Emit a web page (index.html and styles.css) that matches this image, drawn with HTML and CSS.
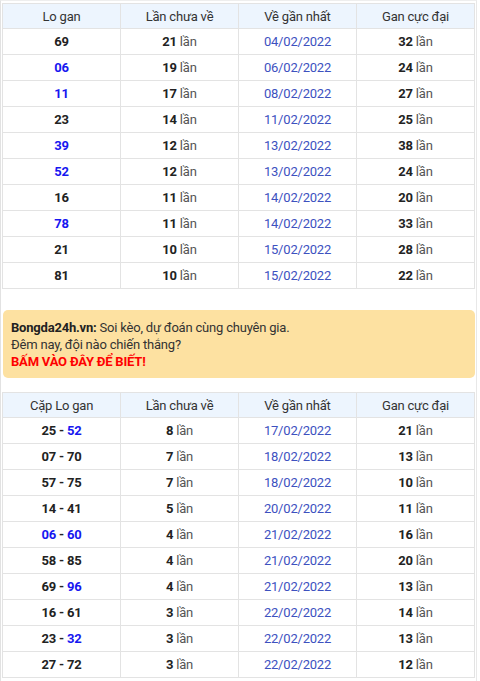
FILE: index.html
```html
<!DOCTYPE html>
<html>
<head>
<meta charset="utf-8">
<link rel="stylesheet" href="styles.css">
</head>
<body>
<div class="page">
  <table class="grid">
    <thead>
      <tr><th>Lo gan</th><th>Lần chưa về</th><th>Về gần nhất</th><th>Gan cực đại</th></tr>
    </thead>
    <tbody>
      <tr><td class="num">69</td><td><b>21</b> lần</td><td class="date">04/02/2022</td><td><b>32</b> lần</td></tr>
      <tr><td class="num blue">06</td><td><b>19</b> lần</td><td class="date">06/02/2022</td><td><b>24</b> lần</td></tr>
      <tr><td class="num blue">11</td><td><b>17</b> lần</td><td class="date">08/02/2022</td><td><b>27</b> lần</td></tr>
      <tr><td class="num">23</td><td><b>14</b> lần</td><td class="date">11/02/2022</td><td><b>25</b> lần</td></tr>
      <tr><td class="num blue">39</td><td><b>12</b> lần</td><td class="date">13/02/2022</td><td><b>38</b> lần</td></tr>
      <tr><td class="num blue">52</td><td><b>12</b> lần</td><td class="date">13/02/2022</td><td><b>24</b> lần</td></tr>
      <tr><td class="num">16</td><td><b>11</b> lần</td><td class="date">14/02/2022</td><td><b>20</b> lần</td></tr>
      <tr><td class="num blue">78</td><td><b>11</b> lần</td><td class="date">14/02/2022</td><td><b>33</b> lần</td></tr>
      <tr><td class="num">21</td><td><b>10</b> lần</td><td class="date">15/02/2022</td><td><b>28</b> lần</td></tr>
      <tr><td class="num">81</td><td><b>10</b> lần</td><td class="date">15/02/2022</td><td><b>22</b> lần</td></tr>
    </tbody>
  </table>

  <div class="promo">
    <div><b>Bongda24h.vn:</b> Soi kèo, dự đoán cùng chuyên gia.</div>
    <div>Đêm nay, đội nào chiến thắng?</div>
    <div class="cta">BẤM VÀO ĐÂY ĐỂ BIẾT!</div>
  </div>

  <table class="grid second">
    <thead>
      <tr><th>Cặp Lo gan</th><th>Lần chưa về</th><th>Về gần nhất</th><th>Gan cực đại</th></tr>
    </thead>
    <tbody>
      <tr><td class="num">25 - <span class="blue">52</span></td><td><b>8</b> lần</td><td class="date">17/02/2022</td><td><b>21</b> lần</td></tr>
      <tr><td class="num">07 - 70</td><td><b>7</b> lần</td><td class="date">18/02/2022</td><td><b>13</b> lần</td></tr>
      <tr><td class="num">57 - 75</td><td><b>7</b> lần</td><td class="date">18/02/2022</td><td><b>10</b> lần</td></tr>
      <tr><td class="num">14 - 41</td><td><b>5</b> lần</td><td class="date">20/02/2022</td><td><b>11</b> lần</td></tr>
      <tr><td class="num"><span class="blue">06</span> - <span class="blue">60</span></td><td><b>4</b> lần</td><td class="date">21/02/2022</td><td><b>16</b> lần</td></tr>
      <tr><td class="num">58 - 85</td><td><b>4</b> lần</td><td class="date">21/02/2022</td><td><b>20</b> lần</td></tr>
      <tr><td class="num">69 - <span class="blue">96</span></td><td><b>4</b> lần</td><td class="date">21/02/2022</td><td><b>13</b> lần</td></tr>
      <tr><td class="num">16 - 61</td><td><b>3</b> lần</td><td class="date">22/02/2022</td><td><b>14</b> lần</td></tr>
      <tr><td class="num">23 - <span class="blue">32</span></td><td><b>3</b> lần</td><td class="date">22/02/2022</td><td><b>13</b> lần</td></tr>
      <tr><td class="num">27 - 72</td><td><b>3</b> lần</td><td class="date">22/02/2022</td><td><b>12</b> lần</td></tr>
    </tbody>
  </table>
</div>
</body>
</html>
```

FILE: styles.css
```css
html, body {
  margin: 0;
  padding: 0;
  background: #fff;
}
body {
  font-family: Roboto, "Liberation Sans", Arial, sans-serif;
  font-size: 13px;
  letter-spacing: -0.2px;
  color: #333;
}
.page {
  width: 477px;
  border-left: 1px solid #e2e2e2;
  border-right: 1px solid #e8e8e8;
  border-top: 1px solid #eee;
  padding: 2px 2px 4px 1px;
  box-sizing: border-box;
  height: 681px;
  overflow: hidden;
}
.grid {
  width: 473px;
  border-collapse: collapse;
  table-layout: fixed;
}
.grid th, .grid td {
  border: 1px solid #e3e3e3;
  text-align: center;
  padding: 0;
}
.grid th {
  background: #edf5fe;
  font-weight: normal;
  color: #333;
  height: 24px;
}
.grid td {
  height: 25px;
  color: #555;
}
.grid td b {
  color: #222;
  font-weight: bold;
}
.grid td.num {
  font-weight: bold;
  color: #222;
}
.grid td.num.blue, .grid .blue {
  color: #1717f0;
}
.grid td.date {
  color: #3d51bf;
}
.promo {
  margin: 21px 0 14px 1px;
  width: 472px;
  box-sizing: border-box;
  background: #fde1a1;
  border-radius: 5px;
  padding: 9px 8px 8px;
  line-height: 17px;
  color: #333;
}
.promo b {
  color: #222;
}
.promo .cta {
  color: #f00;
  font-weight: bold;
}
```
